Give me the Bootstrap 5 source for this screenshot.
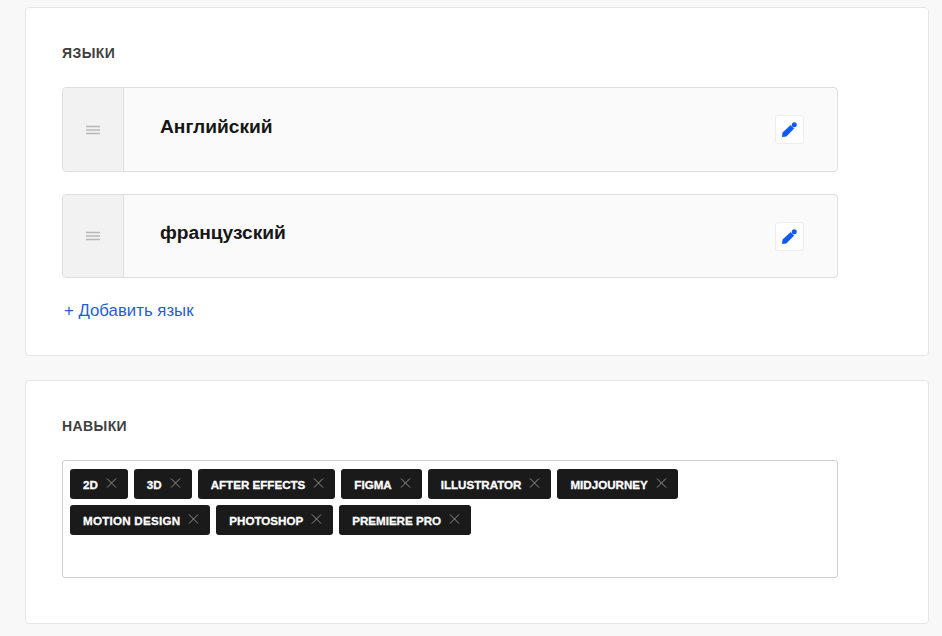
<!DOCTYPE html>
<html lang="ru">
<head>
<meta charset="utf-8">
<title>Профиль</title>
<link href="https://cdn.jsdelivr.net/npm/bootstrap@5.3.0/dist/css/bootstrap.min.css" rel="stylesheet">
<style>
body { background: #f8f8f8; font-family: "Liberation Sans", Arial, sans-serif; color: #161616; }
.page-wrap { padding: 7px 13px 0 25px; }
.panel { background: #fff; border: 1px solid #e6e6e6; border-radius: 4px; padding: 36px 36px 0; margin-bottom: 24px; }
.panel-lang { height: 349px; }
.panel-skill { height: 244px; }
.sec-title { font-size: 14px; font-weight: 700; line-height: 18px; letter-spacing: .4px; color: #3f3f3f; text-transform: uppercase; margin: 0 0 25px; }
.lang-item { width: 776px; height: 85px; background: #fafafa; border: 1px solid #dedede; border-radius: 4px; margin-bottom: 22px; overflow: hidden; }
.lang-item + .lang-item { height: 84px; }
.lang-handle { width: 61px; background: #f2f2f2; border-right: 1px solid #dedede; flex: none; }
.lang-name { font-size: 19.2px; font-weight: 700; line-height: 24px; color: #161616; padding: 27px 0 0 36px; margin: 0; }
.lang-item + .lang-item .lang-name { padding-top: 26px; }
.edit-btn { width: 29px; height: 29px; padding: 0; background: #fff; border: 1px solid #ededed; border-radius: 3px; margin: 27px 33px 0 auto; }
.add-link { font-size: 16.8px; line-height: 22px; color: #1f5fd0; text-decoration: none; display: block; padding-left: 2px; margin-top: 3px; }
.tag-box { width: 776px; height: 118px; border: 1px solid #cfcfcf; border-radius: 3px; padding: 8px 30px 8px 7px; align-content: flex-start; gap: 6px; }
.skill-tag { height: 30px; background: #1a1a1a; color: #fff; border-radius: 3px; padding: 0 11px 0 13px; font-size: 11.6px; font-weight: 700; line-height: 32px; text-transform: uppercase; -webkit-text-stroke: .3px #fff; }
.skill-tag-wide { letter-spacing: .25px; }
.skill-x { margin-left: 8px; flex: none; }
</style>
</head>
<body>
<div class="page-wrap">
  <section class="panel panel-lang">
    <h2 class="sec-title">Языки</h2>
    <div class="lang-item d-flex">
      <div class="lang-handle d-flex align-items-center justify-content-center">
        <svg width="16" height="10" viewBox="0 0 16 10"><path d="M1 1.500h14M1 5h14M1 8.500h14" stroke="#b8b8b8" stroke-width="1.500"/></svg>
      </div>
      <p class="lang-name">Английский</p>
      <button type="button" class="edit-btn btn d-flex align-items-center justify-content-center" aria-label="Изменить">
        <svg width="15" height="15" viewBox="0 0 15 15"><path d="M0 15L.8 10.600 8.600 3.200 12 6.400 4.400 14.200z" fill="#0d5bf0" stroke="#0d5bf0" stroke-width=".4" stroke-linejoin="round"/><circle cx="12.300" cy="2.700" r="2.500" fill="#0d5bf0"/></svg>
      </button>
    </div>
    <div class="lang-item d-flex">
      <div class="lang-handle d-flex align-items-center justify-content-center">
        <svg width="16" height="10" viewBox="0 0 16 10"><path d="M1 1.500h14M1 5h14M1 8.500h14" stroke="#b8b8b8" stroke-width="1.500"/></svg>
      </div>
      <p class="lang-name">французский</p>
      <button type="button" class="edit-btn btn d-flex align-items-center justify-content-center" aria-label="Изменить">
        <svg width="15" height="15" viewBox="0 0 15 15"><path d="M0 15L.8 10.600 8.600 3.200 12 6.400 4.400 14.200z" fill="#0d5bf0" stroke="#0d5bf0" stroke-width=".4" stroke-linejoin="round"/><circle cx="12.300" cy="2.700" r="2.500" fill="#0d5bf0"/></svg>
      </button>
    </div>
    <a class="add-link" href="#">+ Добавить язык</a>
  </section>
  <section class="panel panel-skill">
    <h2 class="sec-title">Навыки</h2>
    <div class="tag-box d-flex flex-wrap">
      <span class="skill-tag d-inline-flex">2D<svg class="skill-x" width="11" height="28" viewBox="0 0 11 28"><path d="M1 9.500l9 9M10 9.500l-9 9" stroke="#8f8f8f" stroke-width="1"/></svg></span>
      <span class="skill-tag d-inline-flex">3D<svg class="skill-x" width="11" height="28" viewBox="0 0 11 28"><path d="M1 9.500l9 9M10 9.500l-9 9" stroke="#8f8f8f" stroke-width="1"/></svg></span>
      <span class="skill-tag d-inline-flex">After Effects<svg class="skill-x" width="11" height="28" viewBox="0 0 11 28"><path d="M1 9.500l9 9M10 9.500l-9 9" stroke="#8f8f8f" stroke-width="1"/></svg></span>
      <span class="skill-tag d-inline-flex">Figma<svg class="skill-x" width="11" height="28" viewBox="0 0 11 28"><path d="M1 9.500l9 9M10 9.500l-9 9" stroke="#8f8f8f" stroke-width="1"/></svg></span>
      <span class="skill-tag d-inline-flex">Illustrator<svg class="skill-x" width="11" height="28" viewBox="0 0 11 28"><path d="M1 9.500l9 9M10 9.500l-9 9" stroke="#8f8f8f" stroke-width="1"/></svg></span>
      <span class="skill-tag d-inline-flex">Midjourney<svg class="skill-x" width="11" height="28" viewBox="0 0 11 28"><path d="M1 9.500l9 9M10 9.500l-9 9" stroke="#8f8f8f" stroke-width="1"/></svg></span>
      <span class="skill-tag skill-tag-wide d-inline-flex">Motion Design<svg class="skill-x" width="11" height="28" viewBox="0 0 11 28"><path d="M1 9.500l9 9M10 9.500l-9 9" stroke="#8f8f8f" stroke-width="1"/></svg></span>
      <span class="skill-tag d-inline-flex">Photoshop<svg class="skill-x" width="11" height="28" viewBox="0 0 11 28"><path d="M1 9.500l9 9M10 9.500l-9 9" stroke="#8f8f8f" stroke-width="1"/></svg></span>
      <span class="skill-tag d-inline-flex">Premiere Pro<svg class="skill-x" width="11" height="28" viewBox="0 0 11 28"><path d="M1 9.500l9 9M10 9.500l-9 9" stroke="#8f8f8f" stroke-width="1"/></svg></span>
    </div>
  </section>
</div>
<script src="https://cdn.jsdelivr.net/npm/bootstrap@5.3.0/dist/js/bootstrap.bundle.min.js"></script>
</body>
</html>
